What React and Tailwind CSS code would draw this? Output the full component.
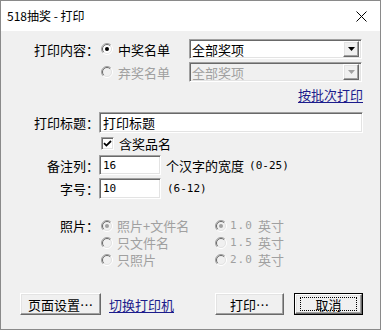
import React from 'react';

const sunken =
  'border border-t-[#a0a0a0] border-l-[#a0a0a0] border-b-white border-r-white shadow-[inset_1px_1px_0_#696969,inset_-1px_-1px_0_#e3e3e3]';
const raised =
  'border border-t-white border-l-white border-b-[#696969] border-r-[#696969] shadow-[inset_-1px_-1px_0_#a0a0a0,inset_1px_1px_0_#e3e3e3]';
const mono = { fontFamily: '"DejaVu Sans Mono", "Noto Sans CJK SC", monospace' };

function Radio({ checked, disabled }) {
  return (
    <svg width="12" height="12" viewBox="0 0 12 12" className="shrink-0">
      <circle cx="6" cy="6" r="5.5" fill={disabled ? '#f0f0f0' : '#fff'} />
      <path d="M2.1 9.9 A5.5 5.5 0 0 1 9.9 2.1" fill="none" stroke="#a0a0a0" />
      <path d="M9.9 2.1 A5.5 5.5 0 0 1 2.1 9.9" fill="none" stroke="#fff" />
      <path d="M2.8 9.2 A4.5 4.5 0 0 1 9.2 2.8" fill="none" stroke="#696969" />
      <path d="M9.2 2.8 A4.5 4.5 0 0 1 2.8 9.2" fill="none" stroke="#e3e3e3" />
      {checked && <circle cx="6" cy="6" r="2" fill={disabled ? '#a0a0a0' : '#000'} />}
    </svg>
  );
}

function Combo({ disabled }) {
  return (
    <div className={`flex h-[20px] w-[173px] items-center ${sunken} ${disabled ? 'bg-[#f0f0f0]' : 'bg-white'}`}>
      <span className={`flex-1 pl-[2px] ${disabled ? 'text-[#a0a0a0]' : 'text-black'}`}>全部奖项</span>
      <div className={`mr-[2px] flex h-[16px] w-[16px] items-center justify-center bg-[#f0f0f0] ${raised}`}>
        <svg width="7" height="4" viewBox="0 0 7 4">
          <path d="M0 0 H7 L3.5 4 Z" fill={disabled ? '#a0a0a0' : '#000'} />
        </svg>
      </div>
    </div>
  );
}

function Field({ width, value, numeric }) {
  return (
    <div className={`flex h-full items-start bg-white pl-[3px] pt-[2px] leading-[15px] ${sunken}`} style={{ width }}>
      <span style={numeric ? mono : undefined} className={numeric ? 'text-[11px]' : ''}>{value}</span>
    </div>
  );
}

function Button({ children, width, primary }) {
  return (
    <div className={`h-[22px] ${primary ? 'border border-black' : ''}`} style={{ width }}>
      <div className={`flex h-full w-full items-center justify-center bg-[#f0f0f0] ${raised}`}>
        {primary ? (
          <div className="flex h-[14px] w-[calc(100%-8px)] items-center justify-center border border-dotted border-black">
            {children}
          </div>
        ) : (
          children
        )}
      </div>
    </div>
  );
}

const photoRows = [
  ['照片：', '照片+文件名', true, '1.0'],
  ['', '只文件名', false, '1.5'],
  ['', '只照片', false, '2.0'],
];

export default function App() {
  return (
    <div
      className="flex h-[330px] w-[381px] flex-col border border-[#8a8a8a] bg-white text-[13px] leading-none text-black"
      style={{ fontFamily: '"Noto Sans CJK SC", sans-serif' }}
    >
      {/* title bar */}
      <div className="flex h-[30px] shrink-0 items-center justify-between bg-white pl-[6px] pr-[13px] text-[12px]">
        <span>518抽奖 - 打印</span>
        <svg width="11" height="11" viewBox="0 0 11 11">
          <path d="M0.5 0.5 L10.5 10.5 M10.5 0.5 L0.5 10.5" stroke="#000" strokeWidth="1" />
        </svg>
      </div>

      {/* body */}
      <div className="flex flex-1 flex-col bg-[#f0f0f0]">
        <div className="mt-[8px] flex h-[20px] items-center">
          <span className="w-[98px] text-right">打印内容：</span>
          <div className="flex w-[90px] items-center gap-[5px] pl-[2px]">
            <Radio checked />
            <span>中奖名单</span>
          </div>
          <Combo />
        </div>

        <div className="mt-[3px] flex h-[20px] items-center">
          <span className="w-[98px]" />
          <div className="flex w-[90px] items-center gap-[5px] pl-[2px] text-[#a0a0a0]">
            <Radio disabled />
            <span>弃奖名单</span>
          </div>
          <Combo disabled />
        </div>

        <div className="mt-[5px] flex h-[14px] items-center justify-end pr-[17px]">
          <span className="text-[#1c1c8c] underline underline-offset-2">按批次打印</span>
        </div>

        <div className="mt-[11px] flex h-[21px] items-stretch">
          <span className="flex w-[98px] items-center justify-end">打印标题：</span>
          <Field width={264} value="打印标题" />
        </div>

        <div className="mt-[2px] flex h-[16px] items-center">
          <span className="w-[100px]" />
          <div className={`flex h-[13px] w-[13px] items-center justify-center bg-white ${sunken}`}>
            <svg width="9" height="9" viewBox="0 0 9 9">
              <path d="M1 4.2 L3.4 6.6 L8 2" fill="none" stroke="#000" strokeWidth="1.8" />
            </svg>
          </div>
          <span className="ml-[5px]">含奖品名</span>
        </div>

        <div className="mt-[4px] flex h-[20px] items-stretch">
          <span className="flex w-[98px] items-center justify-end">备注列：</span>
          <Field width={62} value="16" numeric />
          <span className="ml-[5px] flex items-center">
            个汉字的宽度 <span style={mono} className="ml-[5px] text-[11px]">(0-25)</span>
          </span>
        </div>

        <div className="mt-[3px] flex h-[21px] items-stretch">
          <span className="flex w-[98px] items-center justify-end">字号：</span>
          <Field width={62} value="10" numeric />
          <span style={mono} className="ml-[6px] flex items-center text-[11px]">(6-12)</span>
        </div>

        <div className="mt-[18px] flex flex-col text-[#a0a0a0]">
          {photoRows.map(([label, name, checked, size]) => (
            <div key={size} className="flex h-[17px] items-center">
              <span className="w-[98px] text-right text-black">{label}</span>
              <div className="flex w-[116px] items-center gap-[4px] pl-[2px]">
                <Radio disabled checked={checked} />
                <span>{name}</span>
              </div>
              <div className="flex items-center">
                <Radio disabled checked={checked} />
                <span style={mono} className="ml-[3px] text-[11px] tracking-[1px]">{size}</span>
                <span className="ml-[5px]">英寸</span>
              </div>
            </div>
          ))}
        </div>

        <div className="mt-[25px] flex h-[22px] items-center pl-[19px] pr-[17px]">
          <Button width={81}>页面设置…</Button>
          <span className="ml-[8px] text-[#1c1c8c] underline underline-offset-2">切换打印机</span>
          <div className="ml-auto flex gap-[10px]">
            <Button width={69}>打印…</Button>
            <Button width={69} primary>取消</Button>
          </div>
        </div>
      </div>
    </div>
  );
}
